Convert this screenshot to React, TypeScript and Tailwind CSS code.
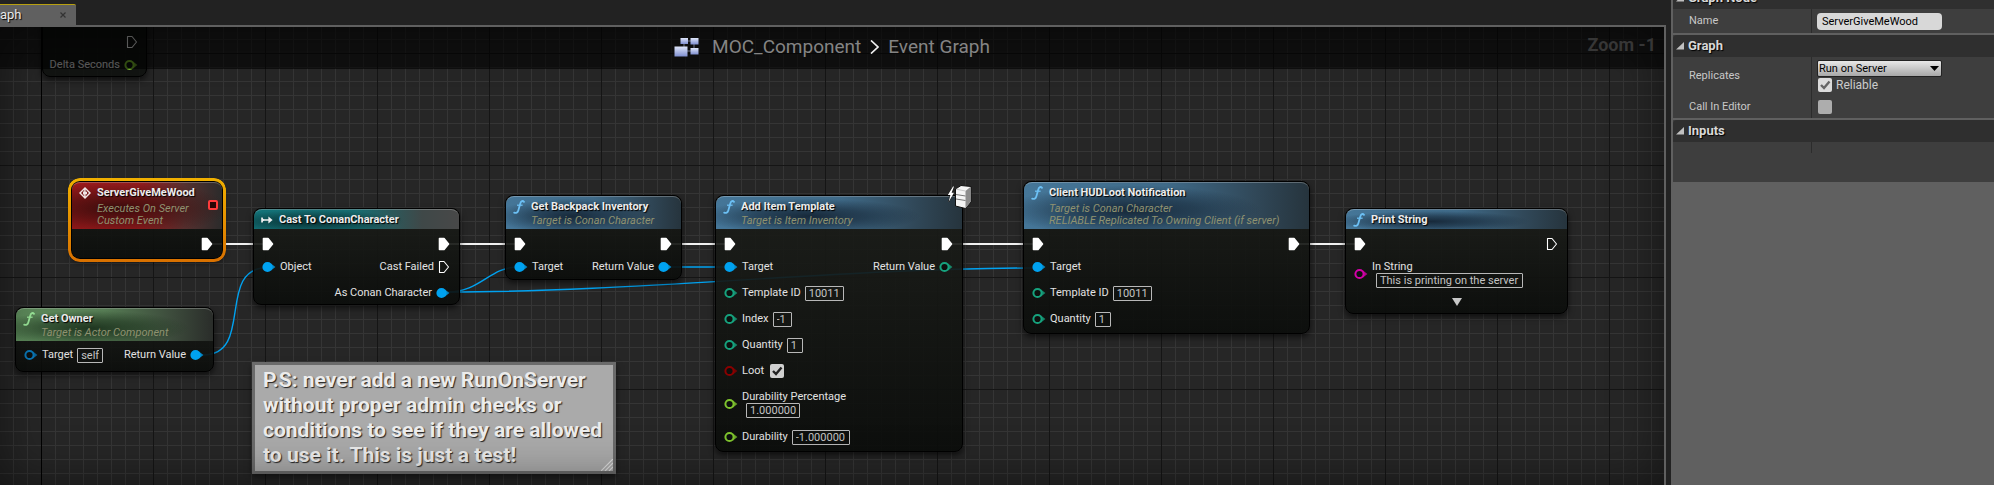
import type { ReactNode } from "react";

const WHITE = "#ffffff";
const BLUE = "#00a2f0";
const TEAL = "#16a37e";
const GREEN = "#7fc42e";
const RED = "#8a0000";
const PINK = "#d400a8";

const HEADERS = {
  event: "bg-[radial-gradient(ellipse_75%_60%_at_30%_55%,#3a0c0c_0%,#3a0c0c99_45%,transparent_100%),linear-gradient(to_right,#a31a1c_0%,#9b1c1e_45%,#56302f_75%,#2b2b2b_100%)]",
  cast: "bg-[radial-gradient(ellipse_45%_60%_at_28%_60%,#082f31_0%,#082f3188_50%,transparent_100%),linear-gradient(to_right,#137379_0%,#176c70_50%,#3f4848_82%,#484848_100%)]",
  pure: "bg-[radial-gradient(ellipse_50%_55%_at_38%_60%,#1f3620_0%,#1f362099_50%,transparent_100%),linear-gradient(to_right,#5f8e5d_0%,#567c54_45%,#3c4a3b_80%,#2a2d2a_100%)]",
  func: "bg-[radial-gradient(ellipse_45%_55%_at_38%_60%,#17293a_0%,#17293a99_50%,transparent_100%),linear-gradient(to_right,#457698_0%,#3f6a88_50%,#31495a_80%,#26343d_100%)]",
};

function ExecPin({ filled = true }: { filled?: boolean }) {
  return (
    <svg width="12" height="14" viewBox="0 0 12 14" className="shrink-0">
      <path
        d="M1.5 1.5H6L10.5 7L6 12.5H1.5Z"
        fill={filled ? WHITE : "none"}
        stroke={WHITE}
        strokeWidth={filled ? 1.6 : 1.1}
        strokeLinejoin="round"
      />
    </svg>
  );
}

function DataPin({ color, filled = false }: { color: string; filled?: boolean }) {
  return (
    <svg width="14" height="12" viewBox="0 0 14 12" className="shrink-0">
      <path d="M9 2.6L13.4 6L9 9.4Z" fill={color} opacity="0.8" />
      <circle cx="5.5" cy="6" r="4.1" fill={filled ? color : "#0d100e"} stroke={color} strokeWidth="2" />
    </svg>
  );
}

function FuncIcon({ color }: { color: string }) {
  return (
    <svg width="12" height="14" viewBox="0 0 12 14" className="shrink-0">
      <path
        d="M11 1.8C9.8 0.4 8 0.8 7.3 3.4L5.3 10.4C4.7 12.6 3 13.4 1.2 12.6"
        fill="none"
        stroke={color}
        strokeWidth="1.8"
        strokeLinecap="round"
      />
      <path d="M4 5.2H9.6" stroke={color} strokeWidth="1.3" />
    </svg>
  );
}

function EventIcon() {
  return (
    <svg width="12" height="14" viewBox="0 0 12 14" className="shrink-0">
      <path d="M6 1L12 7L6 13L0 7Z" fill="#efe6e6" />
      <path d="M5.2 3.8L2 7L5.2 10.2V8.4H4V5.6H5.2Z" fill="#7a1a1c" />
      <path d="M6.6 3.6L10 7L6.6 10.4V8.3H8V5.7H6.6Z" fill="#7a1a1c" />
    </svg>
  );
}

function CastIcon() {
  return (
    <svg width="12" height="14" viewBox="0 0 12 14" className="shrink-0">
      <path d="M1 4.4V9.6M1 7H10" stroke="#f0f0f0" strokeWidth="1.6" fill="none" />
      <path d="M1 4.8L3.4 7L1 9.2Z" fill="#f0f0f0" />
      <path d="M7.4 3.6L11.6 7L7.4 10.4Z" fill="#f0f0f0" />
    </svg>
  );
}

function ServerIcon() {
  return (
    <svg width="26" height="26" viewBox="0 0 26 26">
      <path d="M7 2.5L1.8 11H4.4L2.6 18L8 8.8H5.6L8 2.5Z" fill="#fff" stroke="#111" strokeWidth="0.8" paintOrder="stroke" />
      <path d="M9.5 5L15 1.5L25 2.5V18L19.5 24.5L9.5 22Z" fill="#f4f4f4" stroke="#111" strokeWidth="1" />
      <path d="M19.5 7L24.6 2.8V17.8L19.5 24Z" fill="#8c8c8c" />
      <path d="M10 10.5L19.5 12M10 15L19.5 16.5" stroke="#777" strokeWidth="1" />
      <path d="M10 5.2L19.5 7" stroke="#bbb" strokeWidth="0.8" />
    </svg>
  );
}

function GraphIcon() {
  return (
    <svg width="26" height="20" viewBox="0 0 26 20" className="shrink-0">
      <defs>
        <linearGradient id="block" x1="0" y1="0" x2="0" y2="1">
          <stop offset="0" stopColor="#dfe6fa" />
          <stop offset="1" stopColor="#7f8fd0" />
        </linearGradient>
      </defs>
      <path d="M12 4H18M20 6V12M12 14H18M10 6V10" stroke="#70758a" strokeWidth="1" />
      <rect x="6.5" y="1" width="7.5" height="6" fill="url(#block)" />
      <rect x="16.5" y="1" width="8" height="6.5" fill="url(#block)" />
      <rect x="0.5" y="9.5" width="13" height="10" fill="url(#block)" />
      <rect x="16.5" y="11" width="8" height="6.5" fill="url(#block)" />
    </svg>
  );
}

interface NodeProps {
  title: string;
  lines?: string[];
  kind: keyof typeof HEADERS;
  icon: ReactNode;
  place: string;
  selected?: boolean;
  badge?: ReactNode;
  children: ReactNode;
}

function GraphNode({ title, lines = [], kind, icon, place, selected, badge, children }: NodeProps) {
  return (
    <section
      className={`absolute rounded-lg border border-black bg-linear-to-b from-[#1b1d19]/92 to-[#0b0d0b]/92 shadow-[0_3px_6px_rgba(0,0,0,0.6)] ${place}`}
    >
      {selected && (
        <div className="absolute -inset-1 rounded-xl bg-linear-to-b from-[#f0b000] to-[#d87000] p-[3px] [mask:linear-gradient(#000_0_0)_content-box_exclude,linear-gradient(#000_0_0)]" />
      )}
      <header className={`flex gap-1.5 rounded-t-lg border-t border-white/25 pt-[3px] pb-0.5 pl-[7px] ${HEADERS[kind]}`}>
        {icon}
        <div>
          <h2 className="text-[11px] leading-[14px] font-bold text-[#ececec] [text-shadow:1px_1px_1px_#000]">{title}</h2>
          {lines.length > 0 && (
            <div className={lines.length > 1 ? "pt-[3px]" : "pt-px"}>
              {lines.map((line) => (
                <p key={line} className="text-[11px] leading-3 text-[#8f9270] italic">
                  {line}
                </p>
              ))}
            </div>
          )}
        </div>
      </header>
      {badge}
      {children}
    </section>
  );
}

function Pins({ children, right }: { children: ReactNode; right?: ReactNode }) {
  return (
    <div className="flex justify-between pt-px pr-[9px] pl-2 text-[11px] leading-3 text-[#e2e2e2]">
      <div className="flex flex-col">{children}</div>
      <div className="flex flex-col items-end">{right}</div>
    </div>
  );
}

function InPin({ label, color, filled, children }: { label: string; color: string; filled?: boolean; children?: ReactNode }) {
  return (
    <div className="flex h-[26px] items-center gap-1">
      <DataPin color={color} filled={filled} />
      <span>{label}</span>
      {children}
    </div>
  );
}

function OutPin({ label, children }: { label: string; children: ReactNode }) {
  return (
    <div className="flex h-[26px] items-center gap-1">
      <span>{label}</span>
      {children}
    </div>
  );
}

function Exec({ filled = true }: { filled?: boolean }) {
  return (
    <div className="flex h-6 items-center pt-1">
      <ExecPin filled={filled} />
    </div>
  );
}

function ValueBox({ label, value, width }: { label: string; value: string; width: string }) {
  return (
    <input
      aria-label={label}
      defaultValue={value}
      className={`h-[15px] rounded-[1px] border border-[#b8b8b8] bg-transparent px-[3px] text-[11px] leading-3 text-[#c4c4c4] ${width}`}
    />
  );
}

function Check({ label, box, mark, checked }: { label: string; box: string; mark: string; checked?: boolean }) {
  return (
    <span className="relative inline-flex">
      <input
        type="checkbox"
        aria-label={label}
        defaultChecked={checked}
        className={`size-3.5 appearance-none rounded-xs ${box}`}
      />
      {checked && (
        <svg viewBox="0 0 14 14" className="pointer-events-none absolute inset-0 size-3.5">
          <path d="M3 7L6 10L11.5 3.5" fill="none" stroke={mark} strokeWidth="2.4" />
        </svg>
      )}
    </span>
  );
}

function Wires() {
  return (
    <svg className="absolute inset-0 size-full" fill="none">
      <g stroke="#f2f2f2" strokeWidth="2">
        <path d="M210 217H266M448 217H517M670 217H727M950 217H1035M1297 217H1357" />
      </g>
      <g stroke={BLUE} strokeWidth="1.4">
        <path d="M203 328C255 328 215 240.5 268 240.5" />
        <path d="M448 265C480 265 490 240 518 240" />
        <path d="M448 265C640 265 840 241 1036 241" />
        <path d="M670 240H727" />
      </g>
    </svg>
  );
}

function Canvas() {
  return (
    <main className="relative flex-1 overflow-hidden border-t-2 border-r-2 border-[#606060] bg-[#262626]">
      <div className="absolute inset-0 bg-[linear-gradient(to_right,#353535_1px,transparent_1px),linear-gradient(to_bottom,#353535_1px,transparent_1px)] bg-size-[14px_14px] bg-position-[13px_12px]" />
      <div className="absolute inset-0 bg-[linear-gradient(to_right,#151515_1px,transparent_1px),linear-gradient(to_bottom,#151515_1px,transparent_1px)] bg-size-[112px_112px] bg-position-[41px_26px]" />
      <div className="absolute inset-y-0 left-[41px] w-px bg-black" />
      <Wires />

      <section className="absolute -top-8 left-[42px] h-[82px] w-[105px] rounded-lg border border-black bg-[#111311]/90 pt-[32px] shadow-[0_3px_6px_rgba(0,0,0,0.6)]">
        <div className="flex flex-col items-end pr-2 text-[11px] text-[#e2e2e2]">
          <Exec filled={false} />
          <OutPin label="Delta Seconds">
            <DataPin color={GREEN} />
          </OutPin>
        </div>
      </section>

      <GraphNode
        kind="event"
        title="ServerGiveMeWood"
        lines={["Executes On Server", "Custom Event"]}
        icon={<EventIcon />}
        place="left-[71px] top-[154px] h-[78px] w-[152px]"
        selected
        badge={<div className="absolute top-[18px] right-1 size-[10px] rounded-xs border-2 border-[#ff3b3b] bg-[#2a0505]" />}
      >
        <Pins right={<Exec />}>{null}</Pins>
      </GraphNode>

      <GraphNode kind="cast" title="Cast To ConanCharacter" icon={<CastIcon />} place="left-[253px] top-[181px] h-[97px] w-[207px]">
        <Pins
          right={
            <>
              <Exec />
              <OutPin label="Cast Failed">
                <ExecPin filled={false} />
              </OutPin>
              <OutPin label="As Conan Character">
                <DataPin color={BLUE} filled />
              </OutPin>
            </>
          }
        >
          <Exec />
          <InPin label="Object" color={BLUE} filled />
        </Pins>
      </GraphNode>

      <GraphNode
        kind="pure"
        title="Get Owner"
        lines={["Target is Actor Component"]}
        icon={<FuncIcon color="#9be89a" />}
        place="left-[15px] top-[280px] h-[65px] w-[199px]"
      >
        <Pins
          right={
            <OutPin label="Return Value">
              <DataPin color={BLUE} filled />
            </OutPin>
          }
        >
          <InPin label="Target" color="#0a78b8">
            <ValueBox label="Target" value="self" width="w-[26px]" />
          </InPin>
        </Pins>
      </GraphNode>

      <GraphNode
        kind="func"
        title="Get Backpack Inventory"
        lines={["Target is Conan Character"]}
        icon={<FuncIcon color="#6cc0f4" />}
        place="left-[505px] top-[168px] h-[85px] w-[177px]"
      >
        <Pins
          right={
            <>
              <Exec />
              <OutPin label="Return Value">
                <DataPin color={BLUE} filled />
              </OutPin>
            </>
          }
        >
          <Exec />
          <InPin label="Target" color={BLUE} filled />
        </Pins>
      </GraphNode>

      <GraphNode
        kind="func"
        title="Add Item Template"
        lines={["Target is Item Inventory"]}
        icon={<FuncIcon color="#6cc0f4" />}
        place="left-[715px] top-[168px] h-[257px] w-[248px]"
        badge={
          <div className="absolute -top-3 -right-2.5">
            <ServerIcon />
          </div>
        }
      >
        <Pins
          right={
            <>
              <Exec />
              <OutPin label="Return Value">
                <DataPin color={TEAL} />
              </OutPin>
            </>
          }
        >
          <Exec />
          <InPin label="Target" color={BLUE} filled />
          <InPin label="Template ID" color={TEAL}>
            <ValueBox label="Template ID" value="10011" width="w-[39px]" />
          </InPin>
          <InPin label="Index" color={TEAL}>
            <ValueBox label="Index" value="-1" width="w-[19px]" />
          </InPin>
          <InPin label="Quantity" color={TEAL}>
            <ValueBox label="Quantity" value="1" width="w-4" />
          </InPin>
          <InPin label="Loot" color={RED}>
            <div className="flex pl-0.5">
              <Check label="Loot" box="bg-[#d0d0d0]" mark="#222" checked />
            </div>
          </InPin>
          <div className="flex h-10 items-center gap-1">
            <DataPin color={GREEN} />
            <div className="flex flex-col">
              <span>Durability Percentage</span>
              <div className="flex pl-1">
                <ValueBox label="Durability Percentage" value="1.000000" width="w-[54px]" />
              </div>
            </div>
          </div>
          <InPin label="Durability" color={GREEN}>
            <ValueBox label="Durability" value="-1.000000" width="w-[58px]" />
          </InPin>
        </Pins>
      </GraphNode>

      <GraphNode
        kind="func"
        title="Client HUDLoot Notification"
        lines={["Target is Conan Character", "RELIABLE Replicated To Owning Client (if server)"]}
        icon={<FuncIcon color="#6cc0f4" />}
        place="left-[1023px] top-[154px] h-[153px] w-[287px]"
      >
        <Pins right={<Exec />}>
          <Exec />
          <InPin label="Target" color={BLUE} filled />
          <InPin label="Template ID" color={TEAL}>
            <ValueBox label="Client template ID" value="10011" width="w-[39px]" />
          </InPin>
          <InPin label="Quantity" color={TEAL}>
            <ValueBox label="Client quantity" value="1" width="w-4" />
          </InPin>
        </Pins>
      </GraphNode>

      <GraphNode
        kind="func"
        title="Print String"
        icon={<FuncIcon color="#6cc0f4" />}
        place="left-[1345px] top-[181px] h-[106px] w-[223px]"
      >
        <Pins right={<Exec filled={false} />}>
          <Exec />
          <div className="flex h-10 items-center gap-1">
            <DataPin color={PINK} />
            <div className="flex flex-col">
              <span>In String</span>
              <div className="flex pl-1">
                <ValueBox label="In String" value="This is printing on the server" width="w-[147px]" />
              </div>
            </div>
          </div>
        </Pins>
        <button type="button" aria-label="Expand" className="mx-auto mt-1 block">
          <svg width="10" height="8" viewBox="0 0 10 8">
            <path d="M0 0H10L5 8Z" fill="#c8c8c8" />
          </svg>
        </button>
      </GraphNode>

      <aside className="absolute top-[335px] left-[252px] w-[364px] border-[3px] border-[#6b6b6b] bg-[#aaaaaa] px-2 py-[3px] shadow-[0_3px_6px_rgba(0,0,0,0.5)]">
        <p className="text-[21px] leading-[25px] font-bold whitespace-nowrap text-[#ececec] [text-shadow:1px_1px_1px_#222]">
          P.S: never add a new RunOnServer
          <br />
          without proper admin checks or
          <br />
          conditions to see if they are allowed
          <br />
          to use it. This is just a test!
        </p>
        <svg width="12" height="12" viewBox="0 0 12 12" className="absolute right-0 bottom-0">
          <path d="M0 12L12 0M4 12L12 4M8 12L12 8" stroke="#dedede" strokeWidth="1.2" />
        </svg>
      </aside>

      <div className="pointer-events-none absolute inset-0 shadow-[inset_0_0_50px_rgba(0,0,0,0.5)]" />
      <div className="absolute inset-x-0 top-0 flex h-[42px] items-center justify-center bg-black/60">
        <div className="flex items-center pb-0.5 text-[19px] leading-6 text-[#848484]">
          <GraphIcon />
          <span className="ml-3">MOC_Component</span>
          <svg width="9" height="14" viewBox="0 0 9 14" className="mx-[9px]">
            <path d="M1 0.5L8 7L1 13.5" fill="none" stroke="#f0f0f0" strokeWidth="1.7" />
          </svg>
          <span>Event Graph</span>
        </div>
        <span className="absolute top-1 right-2 text-lg font-bold text-[#363636]">Zoom -1</span>
      </div>
    </main>
  );
}

function Section({ title, children }: { title: string; children: ReactNode }) {
  return (
    <section className="mb-0.5 bg-[#3e3e3e]">
      <h3 className="flex h-[22px] items-center gap-1 rounded-tl-sm bg-[#2f2f2f] pl-[3px] text-[13px] font-bold text-[#d8d8d8] [text-shadow:1px_1px_1px_#000]">
        <svg width="8" height="8" viewBox="0 0 8 8">
          <path d="M8 0V7.5H0Z" fill="#c0c0c0" />
        </svg>
        {title}
      </h3>
      {children}
    </section>
  );
}

function Row({ label, height, children }: { label?: string; height: string; children?: ReactNode }) {
  return (
    <div className={`flex ${height}`}>
      <div className="flex w-[139px] shrink-0 items-center border-r border-[#2c2c2c] pl-4 text-[11px] text-[#c8c8c8]">{label}</div>
      <div className="flex flex-col justify-center pl-[5px]">{children}</div>
    </div>
  );
}

function Details() {
  return (
    <aside className="w-[323px] shrink-0 overflow-hidden bg-[#606060] pl-0.5">
      <div className="-mt-[13px]">
        <Section title="Graph Node">
          <Row label="Name" height="h-[24px]">
            <input
              aria-label="Name"
              defaultValue="ServerGiveMeWood"
              className="h-[17px] w-[125px] rounded-sm bg-[#d8d8d8] px-[5px] text-[11px] text-black"
            />
          </Row>
        </Section>
        <Section title="Graph">
          <Row label="Replicates" height="h-[39px]">
            <div className="relative">
              <select
                aria-label="Replicates"
                className="block h-[17px] w-[125px] appearance-none rounded-xs border border-[#222] bg-linear-to-b from-[#e8e8e8] to-[#a8a8a8] pl-px text-[11px] leading-3 text-black"
              >
                <option>Run on Server</option>
              </select>
              <svg width="9" height="5" viewBox="0 0 9 5" className="pointer-events-none absolute top-1.5 right-[3px]">
                <path d="M0 0H9L4.5 5Z" fill="#000" />
              </svg>
            </div>
            <label className="flex items-center gap-1 pl-px text-xs text-[#cccccc]">
              <Check label="Reliable" box="bg-[#dcdcdc]" mark="#666" checked />
              Reliable
            </label>
          </Row>
          <Row label="Call In Editor" height="h-[22px]">
            <div className="flex pl-px">
              <Check label="Call In Editor" box="bg-[#adadad]" mark="#666" />
            </div>
          </Row>
        </Section>
        <Section title="Inputs">
          <Row height="h-[11px]" />
          <div className="h-[29px]" />
        </Section>
      </div>
    </aside>
  );
}

export default function App() {
  return (
    <div className="flex h-screen overflow-hidden bg-[#222222] font-[Roboto,sans-serif]">
      <div className="flex min-w-0 flex-1 flex-col pr-[5px]">
        <nav className="flex h-[25px] items-end">
          <div className="flex h-[21px] w-[76px] items-center justify-between overflow-hidden rounded-tr-xs border-t border-[#b8a010] bg-[#606060] pr-2.5 text-[13px] text-[#e8e8e8]">
            <span className="[text-shadow:1px_1px_1px_#000]">aph</span>
            <button type="button" aria-label="Close tab">
              <svg width="6" height="6" viewBox="0 0 6 6">
                <path d="M0.5 0.5L5.5 5.5M5.5 0.5L0.5 5.5" stroke="#333" strokeWidth="1.2" />
              </svg>
            </button>
          </div>
        </nav>
        <Canvas />
      </div>
      <Details />
    </div>
  );
}
